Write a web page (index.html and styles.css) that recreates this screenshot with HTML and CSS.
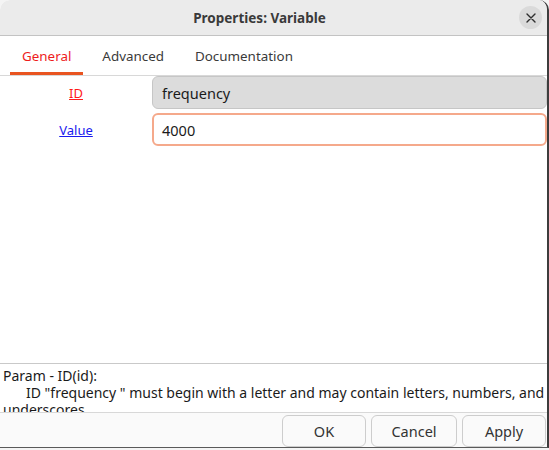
FILE: index.html
```html
<!DOCTYPE html>
<html>
<head>
<meta charset="utf-8">
<link rel="stylesheet" href="styles.css">
</head>
<body>
<div class="window">
  <header class="titlebar">
    <div class="title">Properties: Variable</div>
    <button class="close" aria-label="Close">
      <svg width="10" height="10" viewBox="0 0 10 10"><path d="M1 1L9 9M9 1L1 9" stroke="#2e2e2e" stroke-width="1.4" stroke-linecap="round"/></svg>
    </button>
  </header>
  <nav class="tabs">
    <div class="tab active">General</div>
    <div class="tab">Advanced</div>
    <div class="tab">Documentation</div>
  </nav>
  <main class="form">
    <div class="row">
      <a class="label label-error">ID</a>
      <div class="field field-readonly">frequency</div>
    </div>
    <div class="row">
      <a class="label label-link">Value</a>
      <div class="field field-focus">4000</div>
    </div>
  </main>
  <section class="doc">
    <div class="doc-line">Param - ID(id):</div>
    <div class="doc-line doc-indent">ID "frequency " must begin with a letter and may contain letters, numbers, and</div>
    <div class="doc-line">underscores.</div>
  </section>
  <footer class="actions">
    <button class="btn">OK</button>
    <button class="btn btn-wide">Cancel</button>
    <button class="btn">Apply</button>
  </footer>
</div>
</body>
</html>
```
FILE: styles.css
```css
* { box-sizing: border-box; }
html, body { margin: 0; padding: 0; }
body {
  width: 549px;
  height: 450px;
  overflow: hidden;
  background: #f4f4f4;
  font-family: "Noto Sans", "DejaVu Sans", sans-serif;
  color: #2e2e2e;
}
.window {
  width: 549px;
  height: 448px;
  background: #ffffff;
  border-radius: 10px 10px 0 0;
  border-right: 2px solid #3d3d3d;
  border-bottom: 1px solid #5a5a5a;
  display: flex;
  flex-direction: column;
  overflow: hidden;
}
.titlebar {
  height: 36px;
  flex: none;
  background: #ebebeb;
  border-bottom: 1px solid #c3c3c3;
  display: grid;
  grid-template-columns: 1fr auto;
  align-items: center;
  padding-right: 5px;
}
.title {
  text-align: center;
  font-weight: bold;
  font-size: 13.5px;
  color: #3a3a3a;
}
.close {
  width: 23px;
  height: 23px;
  border-radius: 50%;
  border: none;
  background: #dadada;
  padding: 0;
  display: flex;
  align-items: center;
  justify-content: center;
}
.tabs {
  height: 40px;
  flex: none;
  display: flex;
  gap: 7px;
  padding-left: 10px;
  border-bottom: 1px solid #d8d8d8;
}
.tab {
  padding: 0 12px;
  font-size: 13.4px;
  color: #3a3a3a;
  display: flex;
  align-items: center;
  border-bottom: 3px solid transparent;
  padding-top: 3px;
}
.tab.active {
  color: #ee1c1c;
  border-bottom-color: #e95420;
}
.form {
  flex: 1;
  display: flex;
  flex-direction: column;
  gap: 4px;
  padding-top: 0;
}
.row {
  display: grid;
  grid-template-columns: 152px 1fr;
  align-items: center;
}
.label {
  text-align: center;
  font-size: 13px;
  text-decoration: underline;
}
.label-error { color: #ff1a1a; }
.label-link { color: #1a1aee; }
.field {
  height: 33px;
  border-radius: 6px;
  padding: 0 9px;
  display: flex;
  align-items: center;
  font-size: 14.5px;
  color: #1a1a1a;
}
.field-readonly {
  background: #dcdcdc;
  border: 1px solid #c6c6c6;
}
.field-focus {
  height: 33px;
  background: #ffffff;
  border: 2px solid #f5a98b;
  padding-left: 8px;
}
.doc {
  height: 49px;
  flex: none;
  border-top: 1px solid #c9c9c9;
  padding: 3px 3px 0;
  font-size: 14px;
  line-height: 17px;
  color: #1a1a1a;
  overflow: hidden;
  white-space: nowrap;
}
.doc-indent { padding-left: 23px; }
.actions {
  height: 35px;
  flex: none;
  border-top: 1px solid #d8d8d8;
  background: #fafafa;
  display: flex;
  justify-content: flex-end;
  align-items: flex-start;
  gap: 5px;
  padding: 2px 1px 0 0;
}
.btn {
  width: 84px;
  height: 32px;
  border: 1px solid #cdcdcd;
  border-radius: 6px;
  background: #fafafa;
  font-family: inherit;
  font-size: 14.5px;
  color: #333333;
  padding: 0;
}
.btn-wide { width: 86px; }
```
